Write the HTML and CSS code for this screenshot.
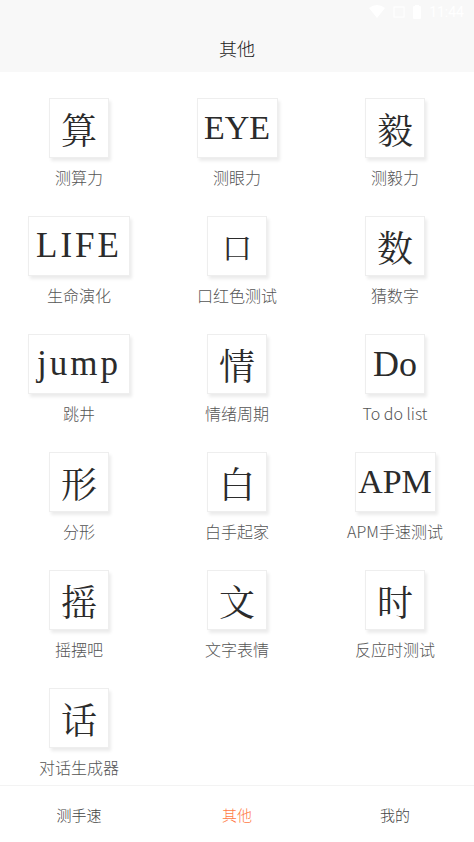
FILE: index.html
```html
<!DOCTYPE html>
<html lang="zh">
<head>
    <meta charset="UTF-8">
    <meta name="viewport" content="width=device-width, initial-scale=1.0">
    <title>其他</title>
    <link rel="stylesheet" href="styles.css">
</head>
<body>
    <div class="zaglavlje">
        <div class="statusBar">
            <svg width="16" height="14" viewBox="0 0 16 14"><path d="M0 3 Q8 -3 16 3 L8 13 Z" fill="#fff"/></svg>
            <svg width="12" height="12" viewBox="0 0 12 12"><rect x="1" y="1" width="10" height="10" fill="none" stroke="#fff" stroke-width="1"/></svg>
            <svg width="8" height="14" viewBox="0 0 8 14"><rect x="0" y="1" width="8" height="13" rx="1" fill="#fff"/><rect x="2" y="0" width="4" height="2" fill="#fff"/></svg>
            <span>11:44</span>
        </div>
        <div class="naslov">其他</div>
    </div>

    <div class="mreza">
        <div class="stavka"><div class="kutija">算</div><div class="oznaka">测算力</div></div>
        <div class="stavka"><div class="kutija lat srednja">EYE</div><div class="oznaka">测眼力</div></div>
        <div class="stavka"><div class="kutija">毅</div><div class="oznaka">测毅力</div></div>

        <div class="stavka"><div class="kutija lat siroka razmak">LIFE</div><div class="oznaka">生命演化</div></div>
        <div class="stavka"><div class="kutija mali">口</div><div class="oznaka">口红色测试</div></div>
        <div class="stavka"><div class="kutija">数</div><div class="oznaka">猜数字</div></div>

        <div class="stavka"><div class="kutija lat siroka razmak">jump</div><div class="oznaka">跳井</div></div>
        <div class="stavka"><div class="kutija">情</div><div class="oznaka">情绪周期</div></div>
        <div class="stavka"><div class="kutija lat">Do</div><div class="oznaka">To do list</div></div>

        <div class="stavka"><div class="kutija">形</div><div class="oznaka">分形</div></div>
        <div class="stavka"><div class="kutija">白</div><div class="oznaka">白手起家</div></div>
        <div class="stavka"><div class="kutija lat srednja">APM</div><div class="oznaka">APM手速测试</div></div>

        <div class="stavka"><div class="kutija">摇</div><div class="oznaka">摇摆吧</div></div>
        <div class="stavka"><div class="kutija">文</div><div class="oznaka">文字表情</div></div>
        <div class="stavka"><div class="kutija">时</div><div class="oznaka">反应时测试</div></div>

        <div class="stavka"><div class="kutija">话</div><div class="oznaka">对话生成器</div></div>
    </div>

    <div class="navigacija">
        <div class="tab">测手速</div>
        <div class="tab aktivan">其他</div>
        <div class="tab">我的</div>
    </div>
</body>
</html>
```

FILE: styles.css
```css
body {
    margin: 0;
    width: 474px;
    height: 842px;
    display: flex;
    flex-direction: column;
    background-color: #fff;
    font-family: "Noto Sans CJK SC", "Noto Sans", sans-serif;
    overflow: hidden;
}
.zaglavlje {
    background-color: #f8f8f8;
    height: 72px;
    flex-shrink: 0;
    display: flex;
    flex-direction: column;
}
.statusBar {
    height: 24px;
    display: flex;
    justify-content: flex-end;
    align-items: center;
    gap: 8px;
    padding-right: 10px;
    color: #fff;
    font-size: 14px;
    font-family: Roboto, sans-serif;
}
.naslov {
    flex: 1;
    display: flex;
    align-items: center;
    justify-content: center;
    font-size: 18px;
    font-weight: 300;
    color: #222;
}
.mreza {
    flex: 1;
    min-height: 0;
    display: grid;
    grid-template-columns: repeat(3, 1fr);
    grid-auto-rows: 118px;
    padding-top: 26px;
}
.stavka {
    display: flex;
    flex-direction: column;
    align-items: center;
}
.kutija {
    width: 60px;
    height: 60px;
    box-sizing: border-box;
    border: 1px solid #eeeeee;
    background-color: #fff;
    box-shadow: 2px 3px 3px rgba(0, 0, 0, 0.08);
    display: flex;
    align-items: center;
    justify-content: center;
    font-family: "AR PL UKai CN", "Noto Serif CJK SC", "Liberation Serif", serif;
    font-size: 36px;
    color: #2b2b2b;
}
.kutija.mali { font-size: 30px; }
.kutija.lat { font-family: "Liberation Serif", serif; }
.kutija.srednja { width: 81px; font-size: 34px; }
.kutija.siroka { width: 102px; font-size: 35px; }
.kutija.razmak { letter-spacing: 3px; }
.oznaka {
    margin-top: 8px;
    font-size: 16px;
    font-weight: 300;
    color: #555;
    line-height: 22px;
}
.navigacija {
    height: 56px;
    flex-shrink: 0;
    border-top: 1px solid #f3f3f3;
    display: flex;
}
.tab {
    flex: 1;
    display: flex;
    align-items: center;
    justify-content: center;
    font-size: 15px;
    font-weight: 300;
    color: #444;
}
.tab.aktivan { color: #ff7a45; }
```
